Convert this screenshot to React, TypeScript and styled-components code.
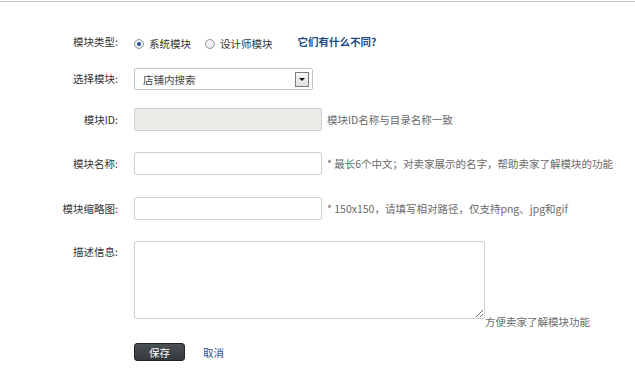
import styled, { createGlobalStyle } from "styled-components";

const GlobalStyle = createGlobalStyle`
  body {
    margin: 0;
    padding: 0;
    background: #fff;
    font-family: "Noto Sans CJK SC", "Liberation Sans", sans-serif;
    font-size: 10.5px;
    color: #333;
  }
`;

const Page = styled.div`
  margin-top: 1px;
  border-top: 1px solid #c9c9c9;
  padding-top: 31px;
`;

const Form = styled.form`
  display: flex;
  flex-direction: column;
`;

const Row = styled.div<{ $mt?: number; $top?: boolean }>`
  display: grid;
  grid-template-columns: 118px auto;
  column-gap: 16px;
  align-items: ${(p) => (p.$top ? "start" : "center")};
  margin-top: ${(p) => p.$mt ?? 0}px;
`;

const Label = styled.label<{ $pt?: number }>`
  text-align: right;
  color: #333;
  line-height: 12px;
  padding-top: ${(p) => p.$pt ?? 0}px;
  white-space: nowrap;
`;

const Field = styled.div<{ $bottom?: boolean; $gap?: number }>`
  display: flex;
  align-items: ${(p) => (p.$bottom ? "flex-end" : "center")};
  gap: ${(p) => p.$gap ?? 5}px;
`;

const RadioGroup = styled.div`
  display: flex;
  align-items: center;
  height: 18px;
`;

const RadioItem = styled.label`
  display: flex;
  align-items: center;
  gap: 5px;
  margin-right: 14px;
  color: #333;
  padding-top: 3px;
`;

const RadioDot = styled.span<{ $checked?: boolean }>`
  width: 10px;
  height: 10px;
  box-sizing: border-box;
  border-radius: 50%;
  border: 1px solid #8d9aa8;
  background: radial-gradient(circle at 40% 35%, #fff 0%, #e6e6e6 70%, #d4d4d4 100%);
  display: flex;
  align-items: center;
  justify-content: center;

  &::after {
    content: "";
    width: 4px;
    height: 4px;
    border-radius: 50%;
    background: ${(p) => (p.$checked ? "#1f4f99" : "transparent")};
  }
`;

const HelpLink = styled.a`
  margin-left: 11px;
  color: #1b4a86;
  font-weight: 600;
  text-decoration: none;
  padding-bottom: 2px;
`;

const Select = styled.div`
  width: 179px;
  height: 22px;
  box-sizing: border-box;
  border: 1px solid #c4c4c4;
  border-radius: 2px;
  background: #fff;
  display: flex;
  align-items: center;
  justify-content: space-between;
  padding: 0 3px 0 8px;
  color: #444;
`;

const SelectArrow = styled.span`
  width: 14px;
  height: 15px;
  box-sizing: border-box;
  border: 1px solid #7a7a7a;
  background: linear-gradient(#fafafa, #dedede);
  display: flex;
  align-items: center;
  justify-content: center;

  &::after {
    content: "";
    border-left: 3px solid transparent;
    border-right: 3px solid transparent;
    border-top: 3px solid #111;
  }
`;

const Input = styled.input<{ $disabled?: boolean }>`
  width: 188px;
  height: 23px;
  box-sizing: border-box;
  border: 1px solid #d0d0d0;
  border-radius: 2px;
  background: ${(p) => (p.$disabled ? "#ecebe7" : "#fff")};
  outline: none;
  font: inherit;
  padding: 0 6px;
`;

const Hint = styled.span<{ $hang?: number }>`
  color: #6a6a6a;
  white-space: nowrap;
  margin-bottom: ${(p) => (p.$hang ? -p.$hang : 0)}px;
`;

const TextArea = styled.textarea`
  width: 351px;
  height: 78px;
  box-sizing: border-box;
  border: 1px solid #cfcfcf;
  border-radius: 2px;
  outline: none;
  font: inherit;
  resize: both;
  margin: 0;
`;

const Actions = styled.div`
  display: flex;
  align-items: center;
  gap: 18px;
`;

const SaveButton = styled.button`
  width: 51px;
  height: 18px;
  border: 1px solid #1f2326;
  border-radius: 3px;
  background: linear-gradient(#4a5054, #33383b);
  color: #fff;
  font: inherit;
  padding: 0;
  cursor: pointer;
`;

const CancelLink = styled.a`
  color: #1f4f8f;
  text-decoration: none;
  padding-top: 1px;
`;

export default function App() {
  return (
    <>
      <GlobalStyle />
      <Page>
        <Form onSubmit={(e) => e.preventDefault()}>
          <Row>
            <Label>模块类型:</Label>
            <RadioGroup>
              <RadioItem>
                <RadioDot $checked />
                系统模块
              </RadioItem>
              <RadioItem>
                <RadioDot />
                设计师模块
              </RadioItem>
              <HelpLink href="#">它们有什么不同?</HelpLink>
            </RadioGroup>
          </Row>

          <Row $mt={17}>
            <Label>选择模块:</Label>
            <Select>
              店铺内搜索
              <SelectArrow />
            </Select>
          </Row>

          <Row $mt={18}>
            <Label>模块ID:</Label>
            <Field>
              <Input $disabled readOnly />
              <Hint>模块ID名称与目录名称一致</Hint>
            </Field>
          </Row>

          <Row $mt={21}>
            <Label>模块名称:</Label>
            <Field>
              <Input />
              <Hint>* 最长6个中文；对卖家展示的名字，帮助卖家了解模块的功能</Hint>
            </Field>
          </Row>

          <Row $mt={22}>
            <Label>模块缩略图:</Label>
            <Field>
              <Input />
              <Hint>* 150x150，请填写相对路径，仅支持png、jpg和gif</Hint>
            </Field>
          </Row>

          <Row $mt={21} $top>
            <Label $pt={5}>描述信息:</Label>
            <Field $bottom $gap={0}>
              <TextArea />
              <Hint $hang={10}>方便卖家了解模块功能</Hint>
            </Field>
          </Row>

          <Row $mt={24}>
            <span />
            <Actions>
              <SaveButton type="submit">保存</SaveButton>
              <CancelLink href="#">取消</CancelLink>
            </Actions>
          </Row>
        </Form>
      </Page>
    </>
  );
}
